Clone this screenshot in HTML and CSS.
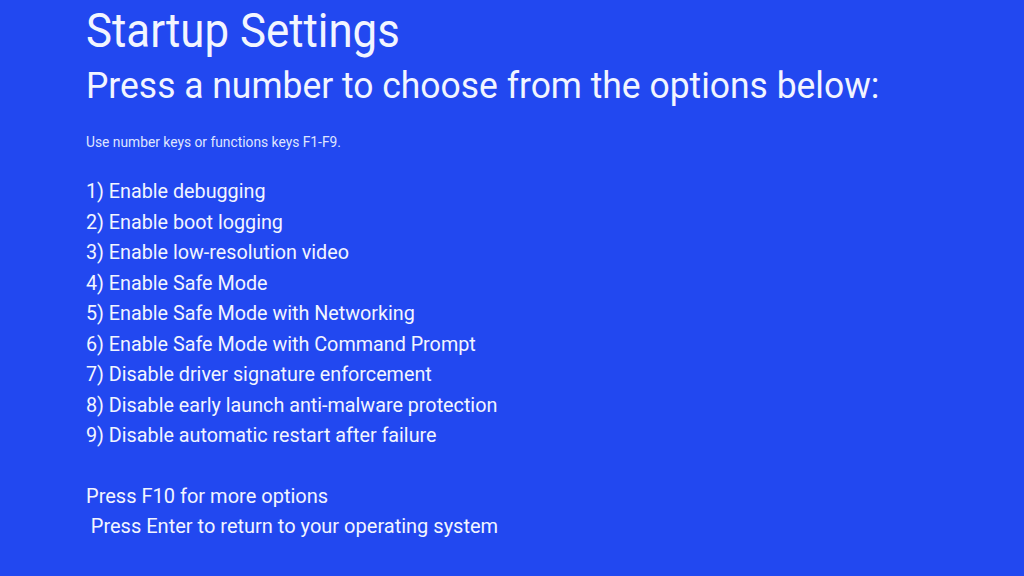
FILE: index.html
```html
<!DOCTYPE html>
<html>
<head>
<meta charset="utf-8">
<link rel="stylesheet" href="styles.css">
</head>
<body>
<main class="screen">
  <h1 class="title">Startup Settings</h1>
  <h2 class="subtitle">Press a number to choose from the options below:</h2>
  <p class="hint">Use number keys or functions keys F1-F9.</p>
  <ol class="options">
    <li>1) Enable debugging</li>
    <li>2) Enable boot logging</li>
    <li>3) Enable low-resolution video</li>
    <li>4) Enable Safe Mode</li>
    <li>5) Enable Safe Mode with Networking</li>
    <li>6) Enable Safe Mode with Command Prompt</li>
    <li>7) Disable driver signature enforcement</li>
    <li>8) Disable early launch anti-malware protection</li>
    <li>9) Disable automatic restart after failure</li>
  </ol>
  <div class="footer">
    <p class="more">Press F10 for more options</p>
    <p class="enter">Press Enter to return to your operating system</p>
  </div>
</main>
</body>
</html>
```
FILE: styles.css
```css
html, body {
  margin: 0;
  padding: 0;
  width: 1024px;
  height: 576px;
  overflow: hidden;
  background: #2248f0;
}
.screen {
  padding: 4px 0 0 86px;
  color: #f2f5ff;
  font-family: Roboto, "Liberation Sans", sans-serif;
}
.title {
  margin: 0;
  font-weight: 400;
  font-size: 48px;
  line-height: 54px;
  transform: scaleX(0.912);
  transform-origin: left center;
}
.subtitle {
  margin: 2px 0 0 0;
  font-weight: 400;
  font-size: 37px;
  line-height: 52px;
  transform: scaleX(0.958);
  transform-origin: left center;
}
.hint {
  margin: 22px 0 0 0;
  font-size: 13.8px;
  line-height: 16px;
  color: #dfe5ff;
}
.options {
  list-style: none;
  margin: 26px 0 0 0;
  padding: 0;
  font-size: 21px;
  line-height: 30.5px;
  transform: scaleX(0.94);
  transform-origin: left center;
}
.footer {
  margin-top: 30px;
  font-size: 21px;
  line-height: 30px;
  transform: scaleX(0.953);
  transform-origin: left center;
}
.footer p { margin: 0; }
.enter { padding-left: 5px; }
```
